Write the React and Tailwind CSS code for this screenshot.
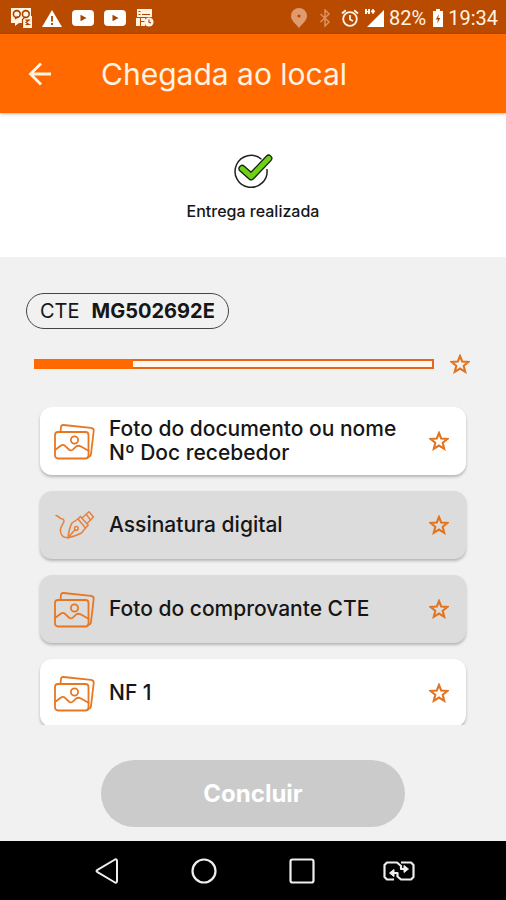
import React from "react";

const steps = [
  { id: "doc", icon: "photo", label: "Foto do documento ou nome Nº Doc recebedor", active: true },
  { id: "sign", icon: "pen", label: "Assinatura digital", active: false },
  { id: "cte", icon: "photo", label: "Foto do comprovante CTE", active: false },
  { id: "nf1", icon: "photo", label: "NF 1", active: true },
];

function StarIcon() {
  return (
    <svg viewBox="0 0 20 20" className="size-5 shrink-0" fill="none" stroke="#e3741f" strokeWidth="2.1" aria-hidden="true">
      <path d="M10 2 12.2 7.5 18.4 7.9 13.7 11.8 15.2 17.8 10 14.6 4.8 17.8 6.3 11.8 1.6 7.9 7.8 7.5Z" />
    </svg>
  );
}

function PhotoIcon() {
  return (
    <svg viewBox="0 0 42 37" className="h-[37px] w-[42px]" fill="none" stroke="#e87722" strokeWidth="1.8" strokeLinecap="round" strokeLinejoin="round" aria-hidden="true">
      <path d="M7.5 8.8 8 4Q8.3 1.8 10.5 2L38 4.8Q41 5.2 40.7 8L38 31Q37.6 33.6 35 33.8" />
      <rect x="2" y="9" width="33.5" height="26.5" rx="3" />
      <circle cx="21.5" cy="17" r="3.6" />
      <path d="M2 27 8 22.5Q10 21.2 12 22.8L16.5 27Q18 28 19.8 26.6L23 23.6Q25 22 27.5 23.3L35.5 27.8" />
    </svg>
  );
}

function PenIcon() {
  return (
    <svg viewBox="0 0 42 30" className="h-[30px] w-[42px]" fill="none" stroke="#e5813d" strokeWidth="1.5" strokeLinecap="round" strokeLinejoin="round" aria-hidden="true">
      <path d="M3 5.5C5.5 5.8 6 8 7.8 8.4 10 8.8 11.6 9.8 10.8 12 9.8 14.8 7 16.6 7.4 21 7.8 25.5 11 27.8 15 27.8" />
      <path d="M15 27.8C15.6 22.5 16.6 17 19 13L25 9 32.5 18 28.5 23C24.5 25 20 26.8 15 27.8Z" />
      <path d="M15 27.8 22 19.8" />
      <circle cx="23.3" cy="18.4" r="1.8" />
      <path d="M25 9 27.4 6.4 35.2 15.2 32.5 18" />
      <path d="M29 8 36 1.8 40.5 7 34 13.5" />
      <path d="M33.2 4.4 37.4 9.8" />
    </svg>
  );
}

function CheckIcon() {
  return (
    <svg viewBox="0 0 42 36" className="h-9 w-[42px]" fill="none" aria-hidden="true">
      <path d="M29.5 6.2A16 16 0 1 0 34.9 16" stroke="#222" strokeWidth="1.5" />
      <path d="M10.2 15.6 19.2 23.6 36.6 5.4" stroke="#16240b" strokeWidth="7.6" strokeLinecap="round" strokeLinejoin="round" />
      <path d="M10.2 15.6 19.2 23.6 36.6 5.4" stroke="#6ed112" strokeWidth="5" strokeLinecap="round" strokeLinejoin="round" />
    </svg>
  );
}

function YoutubeIcon() {
  return (
    <svg viewBox="0 0 22 16" className="h-4 w-[22px]" aria-hidden="true">
      <rect width="22" height="16" rx="4" fill="#fff" />
      <path d="M8.5 4.8 14.5 8 8.5 11.2Z" fill="#a84300" />
    </svg>
  );
}

function StatusBar() {
  return (
    <div className="flex h-[34px] shrink-0 items-center justify-between bg-[#b84b00] pt-0.5 pr-2 pl-[11px] font-['Roboto',sans-serif] text-xl font-normal text-[#fff3e3]">
      <div className="flex items-center gap-2.5">
        <svg viewBox="0 0 21 20" className="h-5 w-[21px]" aria-hidden="true">
          <path d="M0 0H20V8H21V20H12V15H8L4 18V15H0Z" fill="#fff3e3" />
          <g fill="none" stroke="#a84300" strokeWidth="1.6">
            <circle cx="5.8" cy="6" r="3.4" />
            <circle cx="14.8" cy="6" r="3.4" />
            <path d="M4 11 7 8.8M11.5 19V11.5L14 9" strokeWidth="1.2" />
            <path d="M14.5 12.2H18L15 14.5 18 16.5H14.5" strokeWidth="1.2" />
          </g>
        </svg>
        <svg viewBox="0 0 20 17" className="h-[17px] w-5" aria-hidden="true">
          <path d="M10 0 20 17H0Z" fill="#fff" />
          <path d="M10 6V11.5M10 13V15" stroke="#a84300" strokeWidth="1.8" />
        </svg>
        <YoutubeIcon />
        <YoutubeIcon />
        <svg viewBox="0 0 18 18" className="size-[18px]" fill="#fff3e3" aria-hidden="true">
          <path d="M1 0H16V8H1Z" />
          <path d="M0 9H4V17H0ZM5 9H9V12H5ZM5 13H9V17H5Z" />
          <circle cx="13" cy="13" r="4.6" />
          <path d="M2.5 2.5H4.5M2.5 5.5H4.5M6 5.5H14M13 10.6V13.4L15 14" fill="none" stroke="#a84300" strokeWidth="1.1" />
        </svg>
      </div>
      <div className="flex items-center">
        <svg viewBox="0 0 16 20" className="mr-3 h-5 w-4" aria-hidden="true">
          <path d="M8 0A8 8 0 0 1 16 8C16 12.5 11 16 8 20 5 16 0 12.5 0 8A8 8 0 0 1 8 0Z" fill="#df9a6d" />
          <circle cx="8" cy="8" r="1.6" fill="#b84b00" />
        </svg>
        <svg viewBox="0 0 12 18" className="mr-2.5 h-[18px] w-3" fill="none" stroke="#dc935f" strokeWidth="1.5" aria-hidden="true">
          <path d="M1.5 5 10 13 6 17V1L10 5 1.5 13" />
        </svg>
        <svg viewBox="0 0 18 18" className="mr-1.5 size-[18px]" fill="none" stroke="#fff3e3" strokeWidth="1.8" aria-hidden="true">
          <circle cx="9" cy="10" r="6.8" />
          <path d="M9 6V10.5L12 12M1 4.5 4.8 1.2M17 4.5 13.2 1.2" />
        </svg>
        <svg viewBox="0 0 20 18" className="mr-1 h-[18px] w-5" fill="#fff" aria-hidden="true">
          <path d="M19 1V18H2Z" />
          <path d="M0 0H2V2H3V0H5V5H3V3.3H2V5H0ZM6 1.5H7.2V0H8.8V1.5H10V3.2H8.8V4.8H7.2V3.2H6Z" />
        </svg>
        <span className="mr-1.5">82%</span>
        <svg viewBox="0 0 12 18" className="mr-1 h-[18px] w-3" aria-hidden="true">
          <path d="M4 0H8V2H11V18H1V2H4Z" fill="#fff" />
          <path d="M7 5 3.8 10.5H6L5.2 14.5 8.4 9H6.2Z" fill="#a84300" />
        </svg>
        <span>19:34</span>
      </div>
    </div>
  );
}

function StepCard({ step }) {
  return (
    <li className="shrink-0">
      <button
        type="button"
        className={`flex h-[68px] w-full items-center rounded-xl pr-[17px] pl-[13px] text-left shadow-[0_2px_3px_rgba(0,0,0,0.25)] ${
          step.active ? "bg-white" : "bg-[#dcdcdc]"
        }`}
      >
        <span className="mr-3.5 shrink-0">
          {step.icon === "photo" ? <PhotoIcon /> : <PenIcon />}
        </span>
        <span className="min-w-0 flex-1 pr-4 text-[21px] leading-6">{step.label}</span>
        <StarIcon />
      </button>
    </li>
  );
}

function NavBar() {
  return (
    <nav className="grid h-[59px] shrink-0 grid-cols-4 place-items-center bg-black px-[58px] text-[#eee]">
      <button type="button" aria-label="Voltar">
        <svg viewBox="0 0 24 26" className="h-[26px] w-6" fill="none" stroke="currentColor" strokeWidth="2" strokeLinejoin="round">
          <path d="M2.5 11.8 20 1.5Q22 .8 22 3V23Q22 25.2 20 24.5L2.5 14.2Q.5 13 2.5 11.8Z" />
        </svg>
      </button>
      <button type="button" aria-label="Início">
        <svg viewBox="0 0 26 26" className="size-[26px]" fill="none" stroke="currentColor" strokeWidth="2.2">
          <circle cx="13" cy="13" r="11.5" />
        </svg>
      </button>
      <button type="button" aria-label="Recentes">
        <svg viewBox="0 0 26 26" className="size-[26px]" fill="none" stroke="currentColor" strokeWidth="2.2">
          <rect x="1.5" y="1.5" width="23" height="23" rx="2" />
        </svg>
      </button>
      <button type="button" aria-label="Alternar">
        <svg viewBox="0 0 32 20" className="h-5 w-8" fill="none" stroke="currentColor" strokeWidth="2.2" strokeLinejoin="round">
          <path d="M11 18.5H4L1.5 16V4L4 1.5H14L18 5V8H22" />
          <path d="M18 1.5H28L30.5 4V16L28 18.5H18L14.5 15.5V12H10" />
          <path d="M21 4.5 25.5 8 21 11.5ZM11 8.5 6.5 12 11 15.5Z" fill="currentColor" strokeWidth="1" />
        </svg>
      </button>
    </nav>
  );
}

export default function App() {
  return (
    <div className="flex h-screen flex-col bg-[#f1f1f1] font-['Inter',sans-serif] font-medium text-[#161616]">
      <StatusBar />

      <header className="z-10 flex h-[79px] shrink-0 items-center bg-[#ff6900] pl-[27px] text-[#fff3e3] shadow-[0_1px_3px_rgba(0,0,0,0.3)]">
        <button type="button" aria-label="Voltar" className="mr-12">
          <svg viewBox="0 0 26 26" className="size-[26px]" fill="none" stroke="currentColor" strokeWidth="2.8">
            <path d="M24 13H4M14 2.5 3.5 13 14 23.5" />
          </svg>
        </button>
        <h1 className="text-3xl font-normal">Chegada ao local</h1>
      </header>

      <section className="flex h-36 shrink-0 flex-col items-center gap-2.5 bg-white pt-10">
        <CheckIcon />
        <p className="text-base">Entrega realizada</p>
      </section>

      <main className="flex min-h-0 flex-1 flex-col pt-9">
        <div className="ml-[26px] flex h-9 items-center gap-3 self-start rounded-full border border-[#444] px-[13px] text-xl">
          <span className="font-normal">CTE</span>
          <strong className="font-bold">MG502692E</strong>
        </div>

        <div className="mt-[25px] mr-9 ml-[34px] flex items-center gap-4">
          <div className="h-2.5 flex-1 border-2 border-[#e8661a] bg-[#fff6ee]" role="progressbar" aria-label="Progresso" aria-valuenow={25}>
            <div className="-m-0.5 h-2.5 w-1/4 bg-[#ff6900]" />
          </div>
          <StarIcon />
        </div>

        <ul className="mt-[33px] flex min-h-0 flex-1 flex-col gap-4 overflow-hidden px-10">
          {steps.map((step) => (
            <StepCard key={step.id} step={step} />
          ))}
        </ul>

        <button
          type="button"
          disabled
          className="mx-auto mt-[35px] mb-3.5 h-[67px] w-3/5 shrink-0 rounded-full bg-[#cbcbcb] text-2xl font-bold text-white"
        >
          Concluir
        </button>
      </main>

      <NavBar />
    </div>
  );
}
